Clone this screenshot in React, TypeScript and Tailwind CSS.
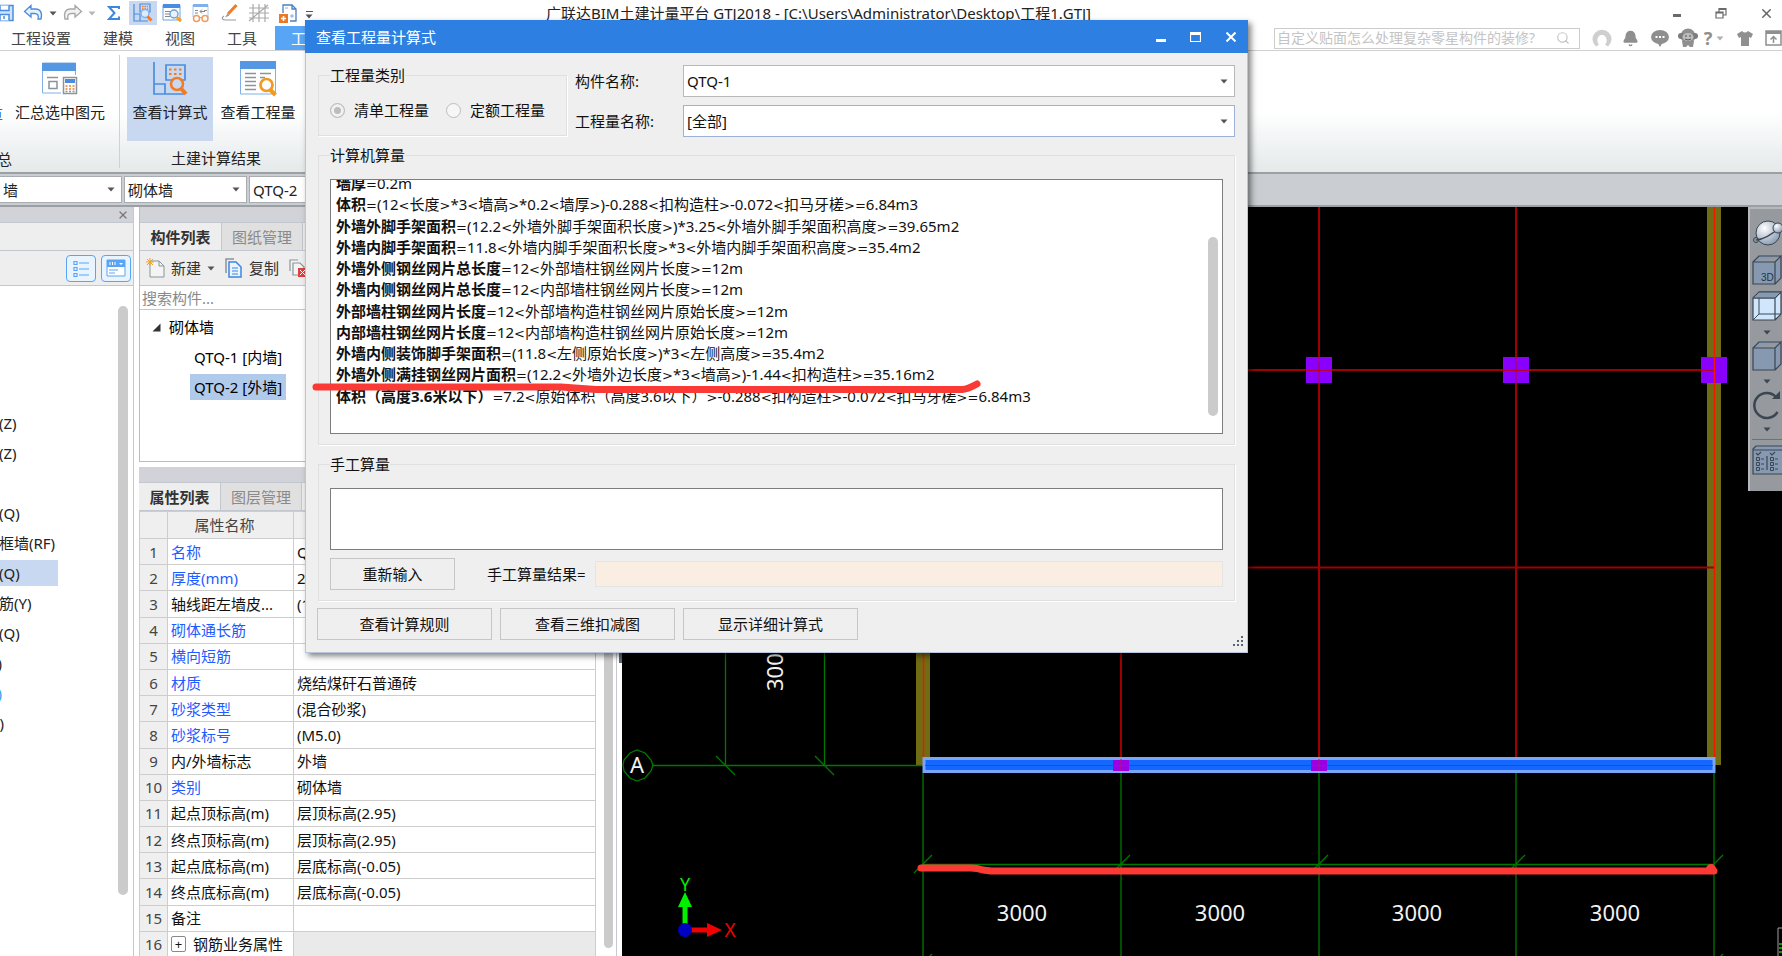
import type { ReactNode } from "react";
import { Search, Bell, X } from "lucide-react";

type Line = { name: string; expr: string };
type Prop = { name: string; value: string; link?: boolean };

const lines: Line[] = [
  { name: "墙厚", expr: "=0.2m" },
  { name: "体积", expr: "=(12<长度>*3<墙高>*0.2<墙厚>)-0.288<扣构造柱>-0.072<扣马牙槎>=6.84m3" },
  { name: "外墙外脚手架面积", expr: "=(12.2<外墙外脚手架面积长度>)*3.25<外墙外脚手架面积高度>=39.65m2" },
  { name: "外墙内脚手架面积", expr: "=11.8<外墙内脚手架面积长度>*3<外墙内脚手架面积高度>=35.4m2" },
  { name: "外墙外侧钢丝网片总长度", expr: "=12<外部墙柱钢丝网片长度>=12m" },
  { name: "外墙内侧钢丝网片总长度", expr: "=12<内部墙柱钢丝网片长度>=12m" },
  { name: "外部墙柱钢丝网片长度", expr: "=12<外部墙构造柱钢丝网片原始长度>=12m" },
  { name: "内部墙柱钢丝网片长度", expr: "=12<内部墙构造柱钢丝网片原始长度>=12m" },
  { name: "外墙内侧装饰脚手架面积", expr: "=(11.8<左侧原始长度>)*3<左侧高度>=35.4m2" },
  { name: "外墙外侧满挂钢丝网片面积", expr: "=(12.2<外墙外边长度>*3<墙高>)-1.44<扣构造柱>=35.16m2" },
  { name: "体积（高度3.6米以下）", expr: "=7.2<原始体积（高度3.6以下）>-0.288<扣构造柱>-0.072<扣马牙槎>=6.84m3" },
];

const props: Prop[] = [
  { name: "名称", value: "QTQ-2", link: true },
  { name: "厚度(mm)", value: "200", link: true },
  { name: "轴线距左墙皮...", value: "(100)" },
  { name: "砌体通长筋", value: "", link: true },
  { name: "横向短筋", value: "", link: true },
  { name: "材质", value: "烧结煤矸石普通砖", link: true },
  { name: "砂浆类型", value: "(混合砂浆)", link: true },
  { name: "砂浆标号", value: "(M5.0)", link: true },
  { name: "内/外墙标志", value: "外墙" },
  { name: "类别", value: "砌体墙", link: true },
  { name: "起点顶标高(m)", value: "层顶标高(2.95)" },
  { name: "终点顶标高(m)", value: "层顶标高(2.95)" },
  { name: "起点底标高(m)", value: "层底标高(-0.05)" },
  { name: "终点底标高(m)", value: "层底标高(-0.05)" },
  { name: "备注", value: "" },
];

const navRows = ["(Z)", "(Z)", "", "(Q)", "框墙(RF)", "(Q)", "筋(Y)", "(Q)"];

const gridX = [1121, 1319, 1516, 1714];

function Caret({ className = "text-[#555]" }: { className?: string }) {
  return (
    <svg width="8" height="5" viewBox="0 0 8 5" className={`shrink-0 ${className}`}>
      <path d="M0.5 0.5h7L4 4.5z" fill="currentColor" />
    </svg>
  );
}

function Combo({ label, value, className }: { label: string; value: string; className: string }) {
  return (
    <div className={`relative flex items-center border bg-white ${className}`}>
      <select aria-label={label} className="h-full w-full appearance-none bg-transparent pl-[3px] outline-none">
        <option>{value}</option>
      </select>
      <span className="pointer-events-none absolute right-[6px]">
        <Caret />
      </span>
    </div>
  );
}

function ToolButton({ label, active, children }: { label: string; active?: boolean; children: ReactNode }) {
  return (
    <button
      type="button"
      aria-label={label}
      className={`flex h-6 w-7 shrink-0 items-center justify-center ${active ? "bg-[#c8d8f0]" : ""}`}
    >
      {children}
    </button>
  );
}

function QuickBar() {
  return (
    <div className="flex h-[26px] w-[320px] shrink-0 items-center">
      <button type="button" aria-label="保存" className="w-[15px] shrink-0">
        <svg width="15" height="18" viewBox="0 0 15 18" fill="none" stroke="#4a8de0" strokeWidth="1.5">
          <path d="M-4 1.5h17v15H-4z" fill="#cfe3fb" />
          <path d="M0 1.5v5h9v-5M0 16.5v-6h9v6M4 12v3" fill="#fff" />
        </svg>
      </button>
      <button type="button" aria-label="撤销" className="ml-2 w-[22px] shrink-0">
        <svg width="22" height="18" viewBox="0 0 22 18">
          <path d="M1.5 7.500L8 1.500v3.500h4.500c5 0 7 3.500 5.500 10h-3c1-4-.5-5.500-3.500-5.500H8v3.500z" fill="#e6f1fd" stroke="#4a8de0" strokeWidth="1.3" />
        </svg>
      </button>
      <span className="flex w-[15px] justify-center"><Caret /></span>
      <button type="button" aria-label="恢复" className="ml-px w-[22px] shrink-0">
        <svg width="22" height="18" viewBox="0 0 22 18">
          <path d="M20.5 7.500L14 1.500v3.500H9.500c-5 0-7 3.500-5.500 10h3c-1-4 .5-5.500 3.500-5.500H14v3.500z" fill="#f2f2f2" stroke="#a8a8a8" strokeWidth="1.3" />
        </svg>
      </button>
      <span className="flex w-[17px] justify-center"><Caret className="text-[#b5b5b5]" /></span>
      <div className="flex gap-px">
        <ToolButton label="汇总计算">
          <svg width="14" height="16" viewBox="0 0 14 16">
            <path d="M12 4V2H2l5.500 6L2 14h10v-2.500" fill="none" stroke="#3f86dd" strokeWidth="2" />
          </svg>
        </ToolButton>
        <ToolButton label="查看计算式" active>
          <svg width="22" height="20" viewBox="0 0 22 20" fill="none">
            <path d="M2 1v17h14M2 11h6v7M8 1h10v8H8z" stroke="#4a8de0" strokeWidth="1.2" />
            <path d="M10 3.500h6M10 6h6" stroke="#f07c28" strokeWidth="1.5" strokeDasharray="1.5 1" />
            <circle cx="13" cy="10.5" r="4" stroke="#7fb0ec" fill="#dcebfb" strokeWidth="1.5" />
            <path d="M15.500 13.500l4 4" stroke="#f07c28" strokeWidth="3" />
          </svg>
        </ToolButton>
        <ToolButton label="查看工程量">
          <svg width="22" height="20" viewBox="0 0 22 20" fill="none">
            <path d="M2 2h17v15H2z" stroke="#6aa2e6" fill="#fff" />
            <path d="M2 1h17v4H2z" fill="#4a8de0" />
            <path d="M4 8.500h6M4 11h5M4 13.500h5" stroke="#888" />
            <circle cx="13" cy="11" r="4" stroke="#6f9fd0" fill="#e8f2fd" strokeWidth="1.4" />
            <path d="M16 14.500l4 3.500" stroke="#f5a020" strokeWidth="3" />
          </svg>
        </ToolButton>
        <ToolButton label="查看">
          <svg width="20" height="20" viewBox="0 0 20 20" fill="none">
            <path d="M2 14V2h15v12" stroke="#a9c8ee" />
            <path d="M2 1h15v3H2z" fill="#7fb0ec" />
            <path d="M4 7.500h3M4 10h3M13 7.500h3M9 8.500h5M11 6.500l-2 2 2 2" stroke="#888" />
            <circle cx="5.5" cy="15.5" r="3" stroke="#f29a5c" strokeWidth="1.5" />
            <circle cx="14" cy="15.5" r="3" stroke="#f29a5c" strokeWidth="1.5" />
            <path d="M8 14.500h3" stroke="#f29a5c" />
          </svg>
        </ToolButton>
        <ToolButton label="绘制">
          <svg width="20" height="20" viewBox="0 0 20 20" fill="none">
            <path d="M16.500 2L8 11" stroke="#f07c28" strokeWidth="3" />
            <path d="M7.500 10.500L5 14.500l4.500-2z" fill="#999" />
            <path d="M4 13c-3 2-2 4 2 4h10" stroke="#999" strokeWidth="1.2" />
          </svg>
        </ToolButton>
        <ToolButton label="轴网">
          <svg width="22" height="20" viewBox="0 0 22 20" fill="none" stroke="#a9a9a9" strokeWidth="1.2">
            <path d="M5 1v18M11 1v18M17 1v18M1 5h20M1 10h20M1 15h20M1 18L20 2" />
          </svg>
        </ToolButton>
        <ToolButton label="新建">
          <svg width="20" height="20" viewBox="0 0 20 20" fill="none">
            <path d="M5 10V2h9l4 4v12h-6M14 2v4h4" stroke="#4a7fc0" strokeWidth="1.3" />
            <path d="M7 5h3M12 13h4M14 11v4" stroke="#7fb0ec" />
            <path d="M1 11h9v9H1z" fill="#ee7726" />
            <path d="M3 15.500h5M5.500 13v5" stroke="#fff" strokeWidth="1.5" />
          </svg>
        </ToolButton>
      </div>
      <span className="flex w-[14px] flex-col items-center gap-[2px] pt-1">
        <span className="h-px w-[7px] bg-[#555]" />
        <Caret />
      </span>
    </div>
  );
}

function TitleBar() {
  return (
    <header className="flex h-[26px] shrink-0 items-center bg-white">
      <QuickBar />
      <h1 className="shrink-0 whitespace-nowrap pl-[226px] text-[15px] text-[#222]">
        广联达BIM土建计量平台 GTJ2018 - [C:\Users\Administrator\Desktop\工程1.GTJ]
      </h1>
      <div className="ml-auto flex items-center gap-[31px] pr-2 text-[#6a6a6a]">
        <button type="button" aria-label="最小化" className="pt-1">
          <svg width="12" height="3" viewBox="0 0 12 3"><path d="M2 0h8v3H2z" fill="currentColor" /></svg>
        </button>
        <button type="button" aria-label="还原">
          <svg width="14" height="13" viewBox="0 0 14 13" fill="none" stroke="currentColor" strokeWidth="1.2">
            <path d="M2 5h7v6H2zM2 6h7M5 5V1.500h7V8H9M5 2.500h7" />
          </svg>
        </button>
        <button type="button" aria-label="关闭"><X size={15} strokeWidth={2.5} /></button>
      </div>
    </header>
  );
}

function MenuBar() {
  return (
    <nav className="flex h-[25px] shrink-0 items-stretch border-b border-[#d0d0d0] bg-white text-[15px] text-[#444]">
      <div className="flex w-[275px] shrink-0 items-center gap-8 pl-[11px]">
        <a href="#setup">工程设置</a>
        <a href="#model">建模</a>
        <a href="#view">视图</a>
        <a href="#tools">工具</a>
      </div>
      <a href="#quantity" className="flex w-[90px] shrink-0 items-center bg-[#58a5f5] pl-4 text-white">工程量</a>
      <div className="ml-auto flex items-center text-[#8f8f8f]">
        <div className="mr-[7px] flex h-[21px] w-[306px] items-center border border-[#cccccc] px-[2px]">
          <input
            aria-label="搜索"
            placeholder="自定义贴面怎么处理复杂零星构件的装修?"
            className="min-w-0 flex-1 text-[14px] outline-none placeholder:text-[#c4c4c4]"
          />
          <Search size={14} className="mr-[7px] text-[#c4c4c4]" />
        </div>
        <button type="button" aria-label="账户" className="w-[29px]">
          <svg width="22" height="20" viewBox="0 0 22 20" className="mx-auto">
            <path d="M5 18.500A9.500 9.500 0 1 1 17 18.500l-3-2c2.500-2 2.500-9.500-3-9.500s-5.500 7.500-3 9.500z" fill="#cfcfcf" />
          </svg>
        </button>
        <button type="button" aria-label="通知" className="flex w-[29px] justify-center"><Bell size={17} fill="currentColor" /></button>
        <button type="button" aria-label="消息" className="w-[29px]">
          <svg width="18" height="18" viewBox="0 0 18 18" className="mx-auto">
            <ellipse cx="9" cy="8" rx="9" ry="7" fill="currentColor" />
            <path d="M6 13l3 5 3-5z" fill="currentColor" />
            <path d="M4.500 8h9" stroke="#fff" strokeWidth="2" strokeDasharray="2 1.5" />
          </svg>
        </button>
        <button type="button" aria-label="助手" className="w-[28px]">
          <svg width="20" height="20" viewBox="0 0 20 20" className="mx-auto">
            <circle cx="10" cy="8" r="7.5" fill="#8f8f8f" />
            <circle cx="3" cy="8" r="3" fill="#7c7c7c" />
            <circle cx="17" cy="8" r="3" fill="#7c7c7c" />
            <path d="M4 13h12l-1 6h-3l-2-2-2 2H5z" fill="#8f8f8f" />
            <ellipse cx="10" cy="9" rx="5.5" ry="4" fill="#bdbdbd" />
            <path d="M7 8h2M11 8h2M7 11q3 2 6 0" stroke="#555" fill="none" />
          </svg>
        </button>
        <button type="button" aria-label="帮助" className="flex w-[24px] items-center justify-center gap-1 text-[18px] font-bold leading-5">
          ?<Caret className="text-[#b0b0b0]" />
        </button>
        <button type="button" aria-label="皮肤" className="w-[38px]">
          <svg width="16" height="16" viewBox="0 0 16 16" className="mx-auto">
            <path d="M5 1q3 3 6 0l5 3-2 4-2-1v9H4V7L2 8 0 4z" fill="currentColor" />
          </svg>
        </button>
        <button type="button" aria-label="收起" className="w-[18px]">
          <svg width="17" height="16" viewBox="0 0 17 16" className="mx-auto" fill="none" stroke="currentColor" strokeWidth="1.5">
            <path d="M1 1h15v14H1zM8.500 13V7M5.500 9.500l3-3 3 3" />
            <path d="M1 2.500h15" strokeWidth="3" />
          </svg>
        </button>
      </div>
    </nav>
  );
}

function Ribbon() {
  return (
    <section className="flex h-[121px] shrink-0 bg-gradient-to-b from-white from-50% to-[#e4e9ea] text-[15px] text-[#222]">
      <div className="relative w-[119px] shrink-0 overflow-hidden">
        <div className="flex h-[94px] pt-[6px]">
          <button type="button" className="flex w-[3px] items-end justify-end overflow-hidden whitespace-nowrap pb-5 text-[#2f6db5]">汇总计算</button>
          <button type="button" className="flex w-[114px] flex-col items-center gap-[5px] pt-1">
            <svg width="38" height="36" viewBox="0 0 38 36" fill="none">
              <path d="M1.500 2h33v30h-33z" fill="#fff" stroke="#7fb0ec" />
              <path d="M1 2h34v8H1z" fill="#5597e3" />
              <path d="M6 16.500h11M8 20.500h8v7H8z" stroke="#8a9499" strokeWidth="1.5" />
              <path d="M20 14h17v20H20z" fill="#fff" />
              <path d="M22.500 16.500h13v16h-13z" fill="#fff" stroke="#8a9499" strokeWidth="1.5" />
              <path d="M24 18h10v4H24z" fill="#4a8de0" />
              <path d="M24.500 25h9M24.500 28h9" stroke="#f07c28" strokeWidth="1.5" strokeDasharray="2 1.5" />
              <path d="M24.500 30.500h9" stroke="#8a9499" strokeWidth="1.5" strokeDasharray="2 1.5" />
            </svg>
            <span className="leading-5">汇总选中图元</span>
          </button>
        </div>
        <span className="flex w-3 justify-end leading-7">总</span>
      </div>
      <div className="mb-1 mt-1 w-px bg-[#cfd2d4]" />
      <div className="flex w-[260px] flex-col pl-[7px]">
        <div className="flex h-[94px] gap-px pt-[6px]">
          <button type="button" className="flex h-[84px] w-[86px] flex-col items-center gap-[5px] bg-[#c8d8f0] pt-1">
            <svg width="36" height="36" viewBox="0 0 36 36" fill="none">
              <path d="M2 1v32h31M2 23h11v10M14 4h19v15H14z" stroke="#4a8de0" strokeWidth="1.7" />
              <path d="M17 8.500h14M17 13h14" stroke="#f07c28" strokeWidth="2.2" strokeDasharray="2.5 2.5" />
              <circle cx="25" cy="23" r="6" stroke="#f07c28" strokeWidth="2.5" fill="#c8d8f0" />
              <path d="M29 27.500l5 5.500" stroke="#f07c28" strokeWidth="4" />
            </svg>
            <span className="leading-5">查看计算式</span>
          </button>
          <button type="button" className="flex h-[84px] w-[88px] flex-col items-center gap-[5px] pt-1">
            <svg width="38" height="36" viewBox="0 0 38 36" fill="none">
              <path d="M1.500 1h35v32h-35z" fill="#fff" stroke="#7fb0ec" />
              <path d="M1 0h36v8H1z" fill="#5597e3" />
              <path d="M6 12.500h11M21 12.500h11M6 16.500h11M21 16.500h5M6 20.500h11M6 24.500h11M6 28.500h11" stroke="#8a9499" strokeWidth="1.5" />
              <circle cx="27.5" cy="24" r="6" fill="#fff" stroke="#f29a20" strokeWidth="2.7" />
              <path d="M31.500 29l5 5" stroke="#f29a20" strokeWidth="4" />
            </svg>
            <span className="leading-5">查看工程量</span>
          </button>
        </div>
        <span className="pl-11 leading-7">土建计算结果</span>
      </div>
    </section>
  );
}

function NavPanel() {
  return (
    <aside className="flex w-[134px] shrink-0 flex-col overflow-hidden border-r border-[#c6c9cf] bg-white text-[15px] text-[#222]">
      <div className="flex h-4 shrink-0 items-center justify-end border-b border-[#c3c8d0] bg-[#d2d3d8] pr-1">
        <button type="button" aria-label="关闭面板" className="text-[#777]"><X size={12} strokeWidth={2.5} /></button>
      </div>
      <div className="h-7 shrink-0 border-b border-[#c3c8d0] bg-[#eeeeee]" />
      <div className="flex h-[35px] shrink-0 items-center justify-end gap-[5px] border-b border-[#c3c8d0] bg-[#eeeeee] pr-[2px]">
        <button type="button" aria-label="列表" className="flex h-[27px] w-[30px] items-center justify-center rounded-[4px] border border-[#58a5f5] bg-[#eaf4ff]">
          <svg width="16" height="17" viewBox="0 0 16 17" fill="none" stroke="#58a5f5">
            <path d="M1 1.500h3v3H1zM1 7.500h3v3H1zM1 13.500h3v3H1zM6 3h10M6 9h10M6 15h10" strokeWidth="1.2" />
          </svg>
        </button>
        <button type="button" aria-label="图标" className="flex h-[27px] w-[30px] items-center justify-center rounded-[4px] border border-[#58a5f5] bg-[#eaf4ff]">
          <svg width="20" height="18" viewBox="0 0 20 18" fill="none">
            <path d="M1 1h18v16H1z" fill="#fff" stroke="#58a5f5" />
            <path d="M1 1h18v7H1z" fill="#58a5f5" />
            <path d="M4 3v3M6.500 3v3M9 3v3" stroke="#fff" />
            <path d="M13 4h4l-2 2z" fill="#fff" />
            <path d="M3 11h9M3 14h6" stroke="#58a5f5" />
          </svg>
        </button>
      </div>
      <div className="flex min-h-0 flex-1">
        <ul className="w-[118px] overflow-hidden whitespace-nowrap pt-[122px]">
          {navRows.map((row, i) => (
            <li key={i} className="flex h-[30px] items-center">
              <span className={`flex h-[26px] items-center ${i === 5 ? "w-[58px] bg-[#c8d8f0]" : ""}`}>
                <span className="-ml-px">{row}</span>
              </span>
            </li>
          ))}
          <li className="flex h-[30px] w-[2px] items-center justify-end overflow-hidden">)</li>
          <li className="flex h-[30px] w-[2px] items-center justify-end overflow-hidden text-[#3aa0e8]">)</li>
          <li className="flex h-[30px] w-1 items-center justify-end overflow-hidden">)</li>
        </ul>
        <div className="mb-[61px] mt-5 w-[10px] rounded-full bg-[#cbcbcb]" />
      </div>
    </aside>
  );
}

function PanelTabs({ first, second }: { first: string; second: string }) {
  return (
    <>
      <div className="h-4 shrink-0 border-b border-[#c3c8d0] bg-[#d2d3d8]" />
      <div className="flex h-7 shrink-0 border-b border-[#c3c8d0] bg-[#eeeeee]">
        <button type="button" className="w-[81px] font-bold text-[#333]">{first}</button>
        <button type="button" className="w-[82px] border-x border-[#c3c8d0] bg-[#e0e0e0] text-[#8a8a8a]">{second}</button>
      </div>
    </>
  );
}

function ComponentPanel() {
  return (
    <section className="flex h-[255px] shrink-0 flex-col border-x border-b border-[#b9bcc2] bg-white">
      <PanelTabs first="构件列表" second="图纸管理" />
      <div className="flex h-[35px] shrink-0 items-center border-b border-[#c3c8d0] bg-[#eeeeee] pl-[6px] text-[#333]">
        <button type="button" className="flex items-center gap-[6px]">
          <svg width="19" height="20" viewBox="0 0 19 20" fill="none">
            <path d="M4 3h9l5 5v11H4z" fill="#f4f4f4" stroke="#8a9499" />
            <path d="M13 3v5h5" stroke="#8a9499" />
            <path d="M1 1l6 6M7 1L1 7M4 0v8M0 4h8" stroke="#f5a020" />
          </svg>
          新建
          <Caret />
        </button>
        <button type="button" className="ml-[10px] flex items-center gap-[7px]">
          <svg width="17" height="20" viewBox="0 0 17 20" fill="none">
            <path d="M1 15V1h8" stroke="#8a9499" strokeWidth="1.5" />
            <path d="M4 4h7l5 5v10H4z" fill="#eaf4ff" stroke="#3f86dd" strokeWidth="1.5" />
            <path d="M7 10h6M7 13h6M7 16h6" stroke="#3f86dd" />
          </svg>
          复制
        </button>
        <button type="button" aria-label="删除" className="ml-[10px]">
          <svg width="20" height="20" viewBox="0 0 20 20" fill="none">
            <path d="M1 13V2h8M4 17V5h7l4 4v8z" fill="#f4f4f4" stroke="#8a9499" strokeWidth="1.2" />
            <path d="M9 10h9v9H9z" fill="#e04040" />
            <path d="M11 12l5 5M16 12l-5 5" stroke="#fff" />
          </svg>
        </button>
      </div>
      <input
        aria-label="搜索构件"
        placeholder="搜索构件..."
        className="h-[24px] shrink-0 border-b border-[#c3c8d0] bg-white pl-[2px] outline-none placeholder:text-[#8a8a8a]"
      />
      <ul className="pt-[2px] leading-[26px]">
        <li className="flex h-[30px] items-center gap-2 pl-3">
          <svg width="9" height="9" viewBox="0 0 9 9"><path d="M8.500 0.500v8h-8z" fill="#333" /></svg>
          砌体墙
        </li>
        <li className="flex h-[30px] items-center pl-[50px]"><span className="px-1">QTQ-1 [内墙]</span></li>
        <li className="flex h-[30px] items-center pl-[50px]"><span className="bg-[#b0caec] px-1">QTQ-2 [外墙]</span></li>
      </ul>
    </section>
  );
}

function PropertyPanel() {
  return (
    <section className="mt-[5px] flex min-h-0 flex-1 flex-col overflow-hidden border-r border-[#c6c9cf] bg-white">
      <PanelTabs first="属性列表" second="图层管理" />
      <div className="flex min-h-0 flex-1">
        <table className="h-[447px] w-[457px] shrink-0 table-fixed border-collapse text-left leading-5">
          <colgroup>
            <col className="w-[28px]" />
            <col className="w-[126px]" />
            <col />
          </colgroup>
          <thead>
            <tr className="h-[27px] bg-[#efefef] text-[#444]">
              <th className="border border-[#cdcdcd]" />
              <th className="border border-[#cdcdcd] pr-3 text-center font-normal">属性名称</th>
              <th className="border border-[#cdcdcd] text-center font-normal">属性值</th>
            </tr>
          </thead>
          <tbody>
            {props.map((p, i) => (
              <tr key={p.name} className="h-[26px]">
                <td className="border border-[#cdcdcd] bg-[#efefef] text-center text-[#444]">{i + 1}</td>
                <td className={`whitespace-nowrap border border-[#cdcdcd] pl-[3px] ${p.link ? "text-[#1f5cff]" : "text-[#111]"}`}>
                  {p.name}
                </td>
                <td className="whitespace-nowrap border border-[#cdcdcd] pl-[3px] text-[#111]">{p.value}</td>
              </tr>
            ))}
            <tr className="h-[26px]">
              <td className="border border-[#cdcdcd] bg-[#efefef] text-center text-[#444]">16</td>
              <td className="border border-[#cdcdcd] pl-[3px] text-[#111]">
                <span className="flex items-center gap-[7px]">
                  <button
                    type="button"
                    aria-label="展开"
                    className="flex h-[16px] w-[15px] items-center justify-center rounded-[2px] border border-[#888] bg-white text-[13px] leading-3"
                  >
                    +
                  </button>
                  钢筋业务属性
                </span>
              </td>
              <td className="border border-[#cdcdcd] bg-[#eaeaea]" />
            </tr>
          </tbody>
        </table>
        <div className="mb-2 ml-2 w-[9px] rounded-b-full bg-[#cbcbcb]" />
      </div>
    </section>
  );
}

function ViewTools() {
  const cube = "M2 9h22v22H2zM2 9l6-6h22M24 9l6-6v22l-6 6";
  return (
    <div className="absolute right-0 top-0 flex h-[284px] w-[34px] flex-col items-center overflow-hidden border-l-2 border-t-2 border-[#b6b8bb] bg-[#96999d] pl-[2px] pt-[6px] text-[#3a4652]">
      <svg width="32" height="36" viewBox="0 0 32 36" className="mb-[2px] shrink-0">
        <defs>
          <radialGradient id="ball" cx="0.35" cy="0.3" r="0.8">
            <stop offset="0" stopColor="#fff" />
            <stop offset="1" stopColor="#7f93ad" />
          </radialGradient>
        </defs>
        <circle cx="17" cy="18" r="12" fill="url(#ball)" stroke="#3a4652" />
        <path d="M5 25Q16 24 28 13" fill="none" stroke="#3a4652" strokeWidth="1.5" />
        <circle cx="27" cy="13" r="5" fill="url(#ball)" stroke="#3a4652" />
        <circle cx="5" cy="25" r="2.5" fill="none" stroke="#3a4652" />
      </svg>
      <svg width="32" height="36" viewBox="0 0 32 36" className="shrink-0">
        <path d={cube} fill="#8799b1" stroke="#3a4652" strokeWidth="1.2" />
        <text x="10" y="28" fontSize="10" fill="#26323e" fontFamily="Liberation Sans, sans-serif">3D</text>
      </svg>
      <svg width="32" height="36" viewBox="0 0 32 36" className="shrink-0">
        <path d={cube} fill="#cfe6fd" stroke="#3a4652" strokeWidth="1.2" />
        <path d="M2 9l6-6h22l-6 6z" fill="#8799b1" stroke="#3a4652" />
        <path d="M8 9v16h22M8 25l-6 6" fill="none" stroke="#3a4652" />
      </svg>
      <span className="flex h-[14px] shrink-0 items-center"><Caret className="text-[#3a4652]" /></span>
      <svg width="32" height="36" viewBox="0 0 32 36" className="shrink-0">
        <path d={cube} fill="#8799b1" stroke="#3a4652" strokeWidth="1.2" />
      </svg>
      <span className="flex h-[12px] shrink-0 items-center"><Caret className="text-[#3a4652]" /></span>
      <svg width="32" height="36" viewBox="0 0 32 36" className="shrink-0">
        <path d="M26.500 25A12.500 12.500 0 1 1 25 10" fill="none" stroke="#3a4652" strokeWidth="2.5" />
        <path d="M21 12h8V4z" fill="#3a4652" />
      </svg>
      <span className="flex h-[12px] shrink-0 items-center"><Caret className="text-[#3a4652]" /></span>
      <span className="mb-1 mt-1 h-px w-full shrink-0 bg-[#6f7175]" />
      <svg width="32" height="32" viewBox="0 0 32 32" className="shrink-0">
        <path d="M2 5l3-3h27v28H2z" fill="#8799b1" stroke="#3a4652" strokeWidth="1.2" />
        <path d="M2 6h30M16 12v14M5 9l2 2 3-3M19 9l2 2 3-3" fill="none" stroke="#3a4652" strokeWidth="1.2" />
        <path d="M5.500 13.500h3v3h-3zM5.500 18.500h3v3h-3zM5.500 23.500h3v3h-3zM19.500 13.500h3v3h-3zM19.500 18.500h3v3h-3zM19.500 23.500h3v3h-3zM10 15h3M10 20h3M10 25h3M24 15h3M24 20h3M24 25h3" fill="none" stroke="#3a4652" />
      </svg>
    </div>
  );
}

function Drawing() {
  return (
    <main className="relative min-w-0 flex-1 overflow-hidden bg-black">
      <svg width="1160" height="749" viewBox="622 207 1160 749" fontFamily="'Noto Sans', sans-serif">
        <path d="M916 207h14v558h-14zM1707 207h14v558h-14z" fill="#6f6c14" />
        <g stroke="#a00000" strokeWidth="2">
          {gridX.slice(0, 3).map((x) => (
            <path key={x} d={`M${x} 207V765`} />
          ))}
          <path d="M923 370H1714M923 567.500H1714" />
        </g>
        {gridX.slice(1).map((x) => (
          <path key={x} d={`M${x - 13} 357h26v26h-26z`} fill="#8a00ff" />
        ))}
        <g stroke="#b80030">
          <path d="M1319 357v26M1516 357v26M1306 370.500h26M1503 370.500h26M1701 370.500h13" />
        </g>
        <path d="M923.500 207V765M1714.500 207V765" stroke="#f01800" strokeWidth="1.5" />
        <g stroke="#007800" strokeWidth="1.3" fill="none">
          <path d="M652 765.500H923M725.500 640V765M824.500 640V765M716 756l19 19M815 756l19 19" />
          <path d="M630 753l7-3 8 3 6 7 2 5-2 6-6 7-8 3-7-3-6-7-1-6 1-5z" />
          <path d="M923 864.500H1714M914 873l18-18M1112 873l18-18M1310 873l18-18M1507 873l18-18M1705 873l18-18" />
          <path d="M923 773V956M1121 773V956M1319 773V956M1516 773V956M1714 773V956M924 962l8-8M1715 962l8-8" />
        </g>
        <path d="M924 758.500h790v13H924z" fill="#1468ff" stroke="#7ba6f7" strokeWidth="3" />
        <path d="M1113 760h16v11h-16zM1311 760h16v11h-16z" fill="#9a00e6" />
        <path d="M925 765.500H1713M1121 759v12M1319 759v12" stroke="#c01450" />
        <g fill="#f2f2f2" fontSize="22">
          <text x="637" y="773" textAnchor="middle">A</text>
          <text x="1022" y="921" textAnchor="middle">3000</text>
          <text x="1220" y="921" textAnchor="middle">3000</text>
          <text x="1417" y="921" textAnchor="middle">3000</text>
          <text x="1615" y="921" textAnchor="middle">3000</text>
          <text transform="translate(783 691) rotate(-90)">3000</text>
        </g>
        <path d="M685 928v-24" stroke="#00f000" strokeWidth="5" />
        <path d="M678 907l7-15 7 15z" fill="#00f000" />
        <path d="M688 930h22" stroke="#f00000" strokeWidth="5" />
        <path d="M707 923l15 7-15 7z" fill="#f00000" />
        <circle cx="685" cy="930" r="7" fill="#0000c0" />
        <text x="685" y="891" fontSize="18" fill="#00f000" textAnchor="middle">Y</text>
        <text x="730" y="937" fontSize="19" fill="#f00000" textAnchor="middle">X</text>
        <path d="M921 868h50q6 0 12 2l8 1H1714" fill="none" stroke="#fb3a36" strokeWidth="7" strokeLinecap="round" strokeLinejoin="round" />
        <circle cx="1711" cy="869" r="5" fill="#fb3a36" />
        <path d="M1782 928h-4v28" fill="none" stroke="#a0a0a0" />
        <path d="M1779 944h3M1779 948h3M1779 952h3" stroke="#00a000" strokeWidth="2" />
      </svg>
      <ViewTools />
    </main>
  );
}

function Expr({ text }: { text: string }) {
  return (
    <>
      {text.split(/([<>=])/).map((part, i) =>
        i % 2 === 1 ? (
          <span key={i} className="font-['DejaVu_Sans',sans-serif] text-[13px] leading-none">{part}</span>
        ) : (
          part
        )
      )}
    </>
  );
}

function GroupBox({ title, className, children }: { title: string; className: string; children: ReactNode }) {
  return (
    <fieldset className={`min-w-0 border border-[#e0e0e0] px-[11px] shadow-[1px_1px_0_#ffffff] ${className}`}>
      <legend className="leading-5">{title}</legend>
      {children}
    </fieldset>
  );
}

function FormulaDialog() {
  return (
    <div
      role="dialog"
      aria-label="查看工程量计算式"
      className="absolute left-[305px] top-5 flex h-[633px] w-[943px] flex-col border border-t-0 border-[#b7c6dc] bg-[#efefef] text-[15px] text-[#111] shadow-[3px_3px_6px_rgba(0,0,0,0.5)]"
    >
      <div className="-mx-px flex h-[33px] shrink-0 items-center justify-between bg-[#2d7fe2] pl-[11px] pr-[10px] text-white">
        <h2>查看工程量计算式</h2>
        <div className="flex gap-5">
          <button type="button" aria-label="最小化" className="flex h-4 w-[15px] items-end justify-center pb-[3px]">
            <svg width="10" height="3" viewBox="0 0 10 3"><path d="M0 0h10v3H0z" fill="#fff" /></svg>
          </button>
          <button type="button" aria-label="最大化" className="flex h-4 w-[15px] items-center justify-center">
            <svg width="11" height="10" viewBox="0 0 11 10" fill="none" stroke="#fff" strokeWidth="1.2">
              <path d="M0.500 1h10v8.500H0.500z" />
              <path d="M0 1.500h11" strokeWidth="3" />
            </svg>
          </button>
          <button type="button" aria-label="关闭" className="flex h-4 w-[15px] items-center justify-center">
            <svg width="10" height="10" viewBox="0 0 10 10" stroke="#fff" strokeWidth="2"><path d="M0.500 0.500l9 9M9.500 0.500l-9 9" /></svg>
          </button>
        </div>
      </div>

      <div className="flex min-h-0 flex-1 flex-col px-3">
        <div className="flex gap-2 pt-3">
          <GroupBox title="工程量类别" className="h-[71px] w-[249px]">
            <div className="flex h-[42px] items-center gap-[17px] pt-2">
              {["清单工程量", "定额工程量"].map((name, i) => (
                <label key={name} className="flex items-center gap-[9px]">
                  <input
                    type="radio"
                    name="kind"
                    defaultChecked={i === 0}
                    className="h-[15px] w-[15px] appearance-none rounded-full border border-[#bdbdbd] bg-[#f6f6f6] checked:bg-[#bdbdbd] checked:shadow-[inset_0_0_0_3px_#f2f2f2]"
                  />
                  {name}
                </label>
              ))}
            </div>
          </GroupBox>
          <div className="flex min-w-0 flex-1 flex-col gap-2">
            <div className="flex items-center">
              <span className="w-[108px] shrink-0">构件名称:</span>
              <Combo label="构件名称" value="QTQ-1" className="h-8 flex-1 border-[#b9b9b9]" />
            </div>
            <div className="flex items-center">
              <span className="w-[108px] shrink-0">工程量名称:</span>
              <Combo label="工程量名称" value="[全部]" className="h-8 flex-1 border-[#9db1da]" />
            </div>
          </div>
        </div>

        <GroupBox title="计算机算量" className="mt-2 h-[300px]">
          <div className="mt-[14px] flex h-[255px] border border-[#7d7d7d] bg-white">
            <div className="flex min-w-0 flex-1 flex-col justify-end overflow-hidden pb-[26px] pl-[5px]">
              <div className="flex h-[234px] shrink-0 flex-col whitespace-nowrap leading-[21px]">
                {lines.map((line) => (
                  <p key={line.name} className="min-h-0 flex-1">
                    <b>{line.name}</b>
                    <Expr text={line.expr} />
                  </p>
                ))}
              </div>
            </div>
            <div className="mb-[17px] mr-1 mt-[57px] w-[10px] rounded-full bg-[#cbcbcb]" />
          </div>
        </GroupBox>

        <GroupBox title="手工算量" className="mt-[9px] h-[147px]">
          <textarea aria-label="手工算量" className="mt-[14px] block h-[62px] w-full resize-none border border-[#7d7d7d] bg-white outline-none" />
          <div className="mt-2 flex items-center">
            <button type="button" className="h-8 w-[125px] border border-[#c6c6c6]">重新输入</button>
            <label htmlFor="manual" className="ml-8 w-[108px]">手工算量结果=</label>
            <input id="manual" readOnly className="h-[26px] min-w-0 flex-1 border border-[#e4e4e4] bg-[#faeee2]" />
          </div>
        </GroupBox>

        <div className="-ml-px mt-[7px] flex gap-2">
          <button type="button" className="h-8 w-[175px] border border-[#c6c6c6]">查看计算规则</button>
          <button type="button" className="h-8 w-[175px] border border-[#c6c6c6]">查看三维扣减图</button>
          <button type="button" className="h-8 w-[175px] border border-[#c6c6c6]">显示详细计算式</button>
        </div>
      </div>

      <svg width="12" height="12" viewBox="0 0 12 12" className="absolute bottom-1 right-[3px]" fill="#5a6470">
        <path d="M9 0h2v2H9zM5 4h2v2H5zM9 4h2v2H9zM1 8h2v2H1zM5 8h2v2H5zM9 8h2v2H9z" />
      </svg>
      <svg width="680" height="20" viewBox="0 0 680 20" className="absolute left-[5px] top-[355px]" fill="none">
        <path d="M5 12H250l35 2.500H651q5 0 15-5.500" stroke="#fb3a36" strokeWidth="7" strokeLinecap="round" strokeLinejoin="round" />
      </svg>
    </div>
  );
}

export default function App() {
  return (
    <div className="relative flex h-screen flex-col overflow-hidden bg-white font-['Noto_Sans','Noto_Sans_CJK_SC',sans-serif] text-[15px] leading-5">
      <TitleBar />
      <MenuBar />
      <Ribbon />
      <div className="flex h-[35px] shrink-0 items-center gap-[2px] border-y-2 border-[#9aa0a4] bg-[#cacdd2] text-[#222]">
        <Combo label="构件类型" value="墙" className="h-[27px] w-[122px] border-l-0 border-[#a9adb2]" />
        <Combo label="构件类别" value="砌体墙" className="h-[27px] w-[123px] border-[#a9adb2]" />
        <Combo label="构件" value="QTQ-2" className="h-[27px] w-[123px] border-[#a9adb2]" />
      </div>
      <div className="flex min-h-0 flex-1">
        <NavPanel />
        <div className="ml-[5px] flex w-[478px] shrink-0 flex-col">
          <ComponentPanel />
          <PropertyPanel />
        </div>
        <div className="w-[5px] shrink-0 bg-white pl-[2px]">
          <div className="h-[456px] bg-[#5d6875]" />
        </div>
        <Drawing />
      </div>
      <FormulaDialog />
    </div>
  );
}
